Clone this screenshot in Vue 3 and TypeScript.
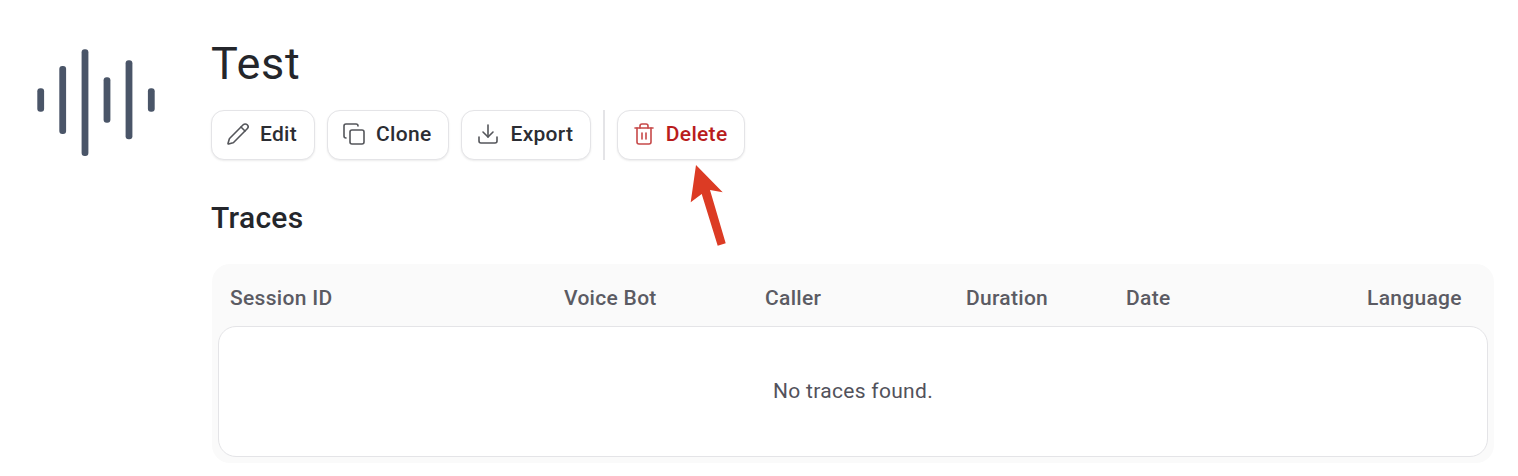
<template>
  <div class="page">
    <div class="logo-col">
      <svg class="logo" width="140" height="120" viewBox="0 0 140 120" fill="#4a5568">
        <rect v-for="b in logoBars" :key="b.x" :x="b.x - 3.4" :y="b.top" width="6.8" :height="b.bottom - b.top" rx="3" />
      </svg>
    </div>
    <main class="content">
      <h1 class="title">Test</h1>
      <div class="actions">
        <button class="btn">
          <svg class="ico" viewBox="0 0 24 24"><path d="M21.2 6.8a1 1 0 0 0-4-4L3.8 16.2a2 2 0 0 0-.5.8L2 21.4a.5.5 0 0 0 .6.6l4.4-1.3a2 2 0 0 0 .8-.5z" /><path d="m15 5 4 4" /></svg>
          Edit
        </button>
        <button class="btn">
          <svg class="ico" viewBox="0 0 24 24"><rect x="8" y="8" width="14" height="14" rx="2" /><path d="M4 16c-1.1 0-2-.9-2-2V4c0-1.1.9-2 2-2h10c1.1 0 2 .9 2 2" /></svg>
          Clone
        </button>
        <button class="btn">
          <svg class="ico" viewBox="0 0 24 24"><path d="M21 15v4a2 2 0 0 1-2 2H5a2 2 0 0 1-2-2v-4" /><path d="m7 10 5 5 5-5" /><path d="M12 15V3" /></svg>
          Export
        </button>
        <span class="divider" />
        <div class="delete-wrap">
          <button class="btn btn--danger">
            <svg class="ico" viewBox="0 0 24 24"><path d="M3 6h18" /><path d="M19 6v14a2 2 0 0 1-2 2H7a2 2 0 0 1-2-2V6" /><path d="M8 6V4a2 2 0 0 1 2-2h4a2 2 0 0 1 2 2v2" /><path d="M10 11v6" /><path d="M14 11v6" /></svg>
            Delete
          </button>
          <svg class="arrow" width="42" height="90" viewBox="0 0 42 90"><path d="M9 5 L35.7 32.3 L23 30 L38.7 83.3 L30.7 85.7 L14.7 34 L3.7 42.3 Z" fill="#dc3b24" /></svg>
        </div>
      </div>
      <h2 class="subtitle">Traces</h2>
      <div class="table">
        <div class="thead">
          <span v-for="c in columns" :key="c.label" class="th" :style="{ width: c.width + 'px' }">{{ c.label }}</span>
        </div>
        <div class="tbody">No traces found.</div>
      </div>
    </main>
  </div>
</template>

<script setup lang="ts">
// bar tops and bottoms are in page pixels, the svg starts at y=40 and x=20
const logoBars = [
  { x: 40.7, top: 88.3, bottom: 111.7 },
  { x: 62.7, top: 66, bottom: 134 },
  { x: 85, top: 49.3, bottom: 156 },
  { x: 107, top: 77.3, bottom: 122.7 },
  { x: 129, top: 60.3, bottom: 139.3 },
  { x: 151.3, top: 88.3, bottom: 111.7 }
].map((b) => ({ x: b.x - 20, top: b.top - 40, bottom: b.bottom - 40 }))

const columns = [
  { label: 'Session ID', width: 334 },
  { label: 'Voice Bot', width: 201 },
  { label: 'Caller', width: 201 },
  { label: 'Duration', width: 160 },
  { label: 'Date', width: 241 },
  { label: 'Language', width: 95 }
]
</script>

<style>
body {
  margin: 0;
  background: #fff;
  overflow: hidden;
}
</style>

<style scoped>
.page {
  display: flex;
  height: 476px;
  font-family: Roboto, "Liberation Sans", sans-serif;
  color: #24262b;
  overflow: hidden;
}

.logo-col {
  width: 211px;
  flex: none;
  padding: 40px 0 0 20px;
  box-sizing: border-box;
}

.logo {
  display: block;
}

.content {
  flex: 1;
  padding: 36px 24px 0 0;
  min-width: 0;
}

.title {
  margin: 0;
  font-size: 45px;
  font-weight: 400;
  line-height: 56px;
  letter-spacing: 0.75px;
}

.actions {
  display: flex;
  align-items: center;
  gap: 12px;
  margin-top: 18px;
}

.btn {
  display: flex;
  align-items: center;
  gap: 10px;
  height: 50px;
  padding: 0 17px 2px 14px;
  background: #fff;
  border: 1px solid #e4e4e7;
  border-radius: 13px;
  box-shadow: 0 1px 2px rgba(0, 0, 0, 0.08);
  font: 500 21px Roboto, sans-serif;
  letter-spacing: 0.3px;
  color: #2b2d33;
}

.btn--danger {
  color: #b91c1c;
}

.ico {
  width: 24px;
  height: 24px;
  fill: none;
  stroke: currentColor;
  stroke-width: 1.6;
  stroke-linecap: round;
  stroke-linejoin: round;
  opacity: 0.8;
}

.divider {
  width: 1.5px;
  height: 50px;
  background: #e4e4e7;
}

.delete-wrap {
  position: relative;
}

.arrow {
  position: absolute;
  top: 50px;
  left: 70px;
}

.subtitle {
  margin: 39px 0 0;
  font-size: 30px;
  font-weight: 500;
  line-height: 38px;
  letter-spacing: 0.3px;
}

.table {
  margin: 27px 0 0 1px;
  background: #fafafa;
  border-radius: 18px;
  padding: 0 6px 6px;
}

.thead {
  display: flex;
  height: 62px;
  box-sizing: border-box;
  padding: 6px 0 0 12px;
  align-items: center;
}

.th {
  font-size: 21px;
  font-weight: 500;
  letter-spacing: 0.3px;
  color: #5b5b63;
  white-space: nowrap;
}

.tbody {
  height: 127px;
  padding-bottom: 2px;
  display: flex;
  align-items: center;
  justify-content: center;
  background: #fff;
  border: 1px solid #e4e4e7;
  border-radius: 18px;
  font-size: 21px;
  letter-spacing: 0.3px;
  color: #52525b;
  line-height: 24px;
}
</style>
